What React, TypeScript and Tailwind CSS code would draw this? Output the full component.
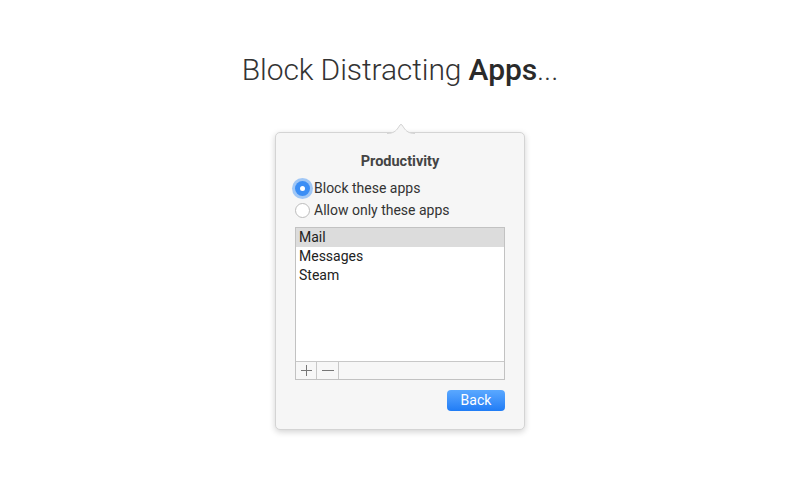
import React from "react";

export default function App() {
  return (
    <div className="w-[800px] h-[500px] bg-white flex flex-col items-center" style={{ fontFamily: "'Helvetica Neue', Roboto, 'Liberation Sans', sans-serif" }}>
      <h1 className="mt-[52px] text-[30px] leading-[36px] text-[#333] font-light tracking-[-0.1px]" style={{ fontFamily: "Roboto, 'Liberation Sans', sans-serif" }}>
        Block Distracting <span className="font-medium text-[#2a2a2a]">Apps</span>...
      </h1>
      <div className="relative mt-[44px] w-[250px] h-[298px] bg-[#f6f6f6] rounded-[5px] border border-[#d4d4d4] shadow-[0_2px_6px_rgba(0,0,0,0.18)] flex flex-col px-[19px]">
        <svg className="absolute left-[111px] top-[-13px]" width="28" height="14" viewBox="0 0 28 14">
          <path d="M0 13.5 C6 13.5 9 11 11 8 L13 5 Q14 3.6 15 5 L17 8 C19 11 22 13.5 28 13.5 L28 14 L0 14 Z" fill="#f6f6f6" />
          <path d="M0 13.5 C6 13.5 9 11 11 8 L13 5 Q14 3.6 15 5 L17 8 C19 11 22 13.5 28 13.5" fill="none" stroke="#d4d4d4" strokeWidth="1" />
        </svg>
        <div className="mt-[20px] text-center text-[14.5px] leading-[18px] font-bold text-[#444]" style={{ fontFamily: "Roboto, 'Liberation Sans', sans-serif" }}>Productivity</div>
        <div className="mt-[8px] flex items-center h-[18px]">
          <div className="w-[15px] h-[15px] rounded-full bg-[#3b8ef5] flex items-center justify-center shadow-[0_0_0_3px_rgba(90,160,245,0.55)]">
            <div className="w-[5px] h-[5px] rounded-full bg-white" />
          </div>
          <span className="ml-[4px] text-[14px] text-[#333]" style={{ fontFamily: "Roboto, 'Liberation Sans', sans-serif" }}>Block these apps</span>
        </div>
        <div className="mt-[4px] flex items-center h-[18px]">
          <div className="w-[15px] h-[15px] rounded-full bg-white border border-[#bcbcbc]" />
          <span className="ml-[4px] text-[14px] text-[#333]" style={{ fontFamily: "Roboto, 'Liberation Sans', sans-serif" }}>Allow only these apps</span>
        </div>
        <div className="mt-[8px] h-[153px] border border-[#c2c2c2] bg-white flex flex-col text-[14px] text-[#222]" style={{ fontFamily: "Roboto, 'Liberation Sans', sans-serif" }}>
          <div className="h-[19px] bg-[#dcdcdc] pl-[3px] leading-[19px]">Mail</div>
          <div className="h-[19px] pl-[3px] leading-[19px]">Messages</div>
          <div className="h-[19px] pl-[3px] leading-[19px]">Steam</div>
          <div className="flex-1" />
          <div className="h-[18px] border-t border-[#c8c8c8] bg-[#f7f7f7] flex">
            <div className="w-[21px] border-r border-[#c8c8c8] flex items-center justify-center">
              <svg width="11" height="11" viewBox="0 0 11 11"><path d="M5.5 0 V11 M0 5.5 H11" stroke="#777" strokeWidth="1" /></svg>
            </div>
            <div className="w-[22px] border-r border-[#c8c8c8] flex items-center justify-center">
              <svg width="12" height="11" viewBox="0 0 12 11"><path d="M0 5.5 H12" stroke="#777" strokeWidth="1" /></svg>
            </div>
          </div>
        </div>
        <div className="mt-[10px] flex justify-end">
          <div className="w-[58px] h-[21px] rounded-[4px] bg-gradient-to-b from-[#5aa8ff] to-[#1f7cf5] text-white text-[14px] leading-[21px] text-center" style={{ fontFamily: "Roboto, 'Liberation Sans', sans-serif" }}>Back</div>
        </div>
      </div>
    </div>
  );
}
